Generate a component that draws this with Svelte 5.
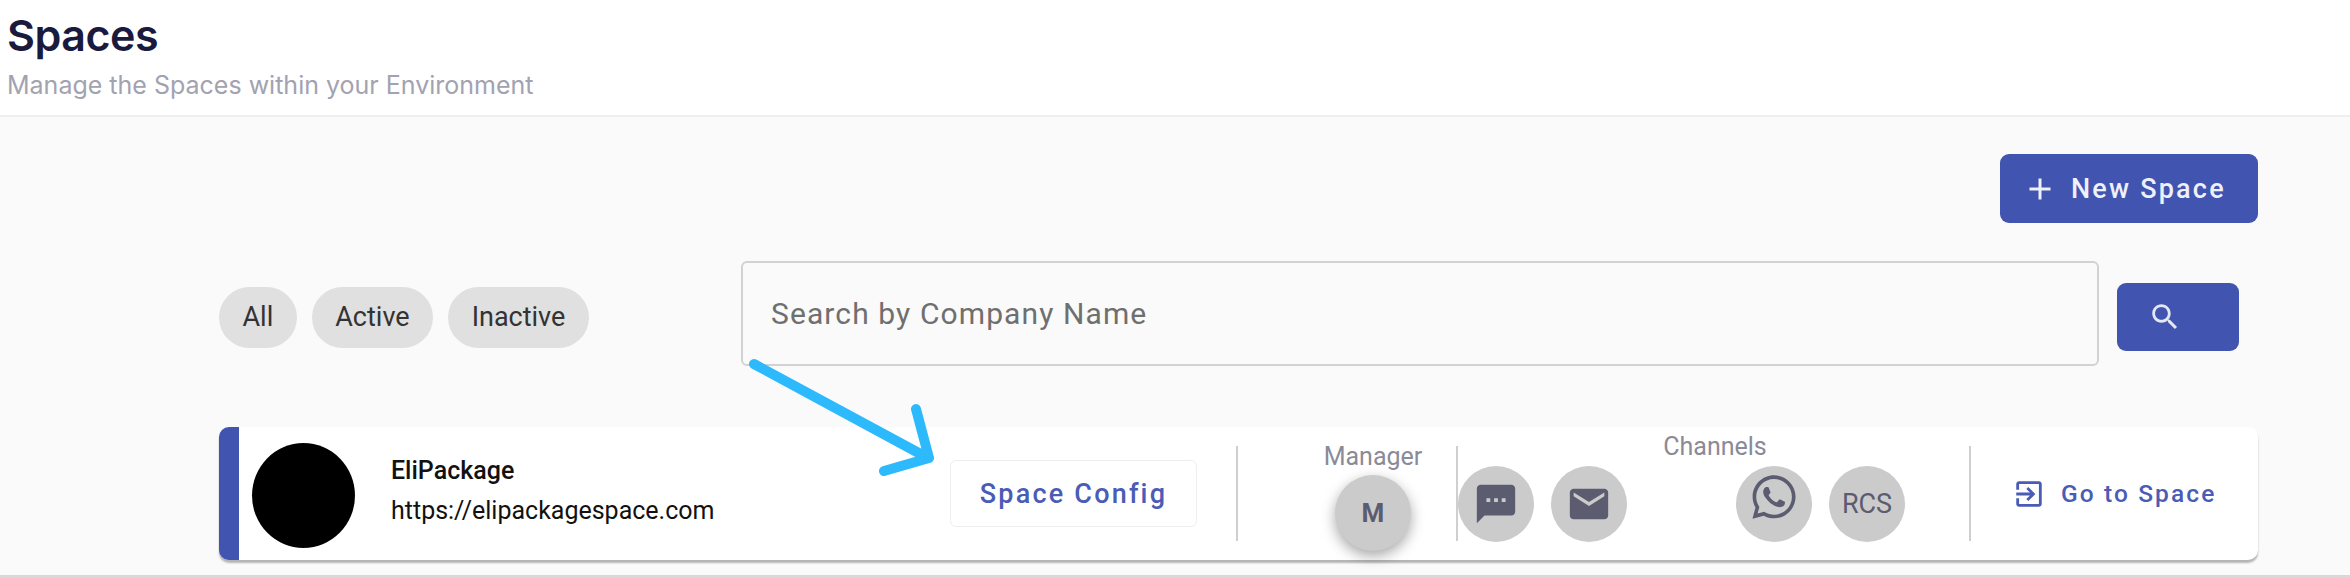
<script lang="ts">
  const filters = ['All', 'Active', 'Inactive'];
</script>

<header class="head">
  <h1>Spaces</h1>
  <p>Manage the Spaces within your Environment</p>
</header>

<main class="page">
  <div class="actions">
    <button class="new">
      <svg viewBox="0 0 24 24" width="36" height="36"><path d="M19 13h-6v6h-2v-6H5v-2h6V5h2v6h6v2z" /></svg>
      New Space
    </button>
  </div>

  <div class="filters">
    <div class="chips">
      {#each filters as f}
        <span class="chip">{f}</span>
      {/each}
    </div>
    <div class="search">Search by Company Name</div>
    <button class="go-search" aria-label="Search">
      <svg viewBox="0 0 24 24" width="34" height="34"><path d="M15.5 14h-.79l-.28-.27C15.41 12.59 16 11.11 16 9.5 16 5.91 13.09 3 9.5 3S3 5.91 3 9.5 5.91 16 9.5 16c1.61 0 3.09-.59 4.23-1.57l.27.28v.79l5 4.99L20.49 19l-4.99-5zm-6 0C7.01 14 5 11.99 5 9.5S7.01 5 9.5 5 14 7.01 14 9.5 11.99 14 9.5 14z" /></svg>
    </button>
  </div>

  <section class="card">
    <div class="identity">
      <div class="avatar"></div>
      <div class="names">
        <b>EliPackage</b>
        <span>https://elipackagespace.com</span>
      </div>
    </div>
    <button class="config">Space Config</button>
    <div class="rule first"></div>
    <div class="manager">
      <div class="label">Manager</div>
      <div class="circle raised">M</div>
    </div>
    <div class="rule"></div>
    <div class="channels">
      <div class="label">Channels</div>
      <div class="chan-row">
        <div class="circle">
          <svg viewBox="0 0 24 24" width="46" height="46"><path d="M20 2H4c-1.1 0-1.99.9-1.99 2L2 22l4-4h14c1.1 0 2-.9 2-2V4c0-1.1-.9-2-2-2zM9 11H7V9h2v2zm4 0h-2V9h2v2zm4 0h-2V9h2v2z" /></svg>
        </div>
        <div class="circle">
          <svg viewBox="0 0 24 24" width="46" height="46"><path d="M20 4H4c-1.1 0-1.99.9-1.99 2L2 18c0 1.1.9 2 2 2h16c1.1 0 2-.9 2-2V6c0-1.1-.9-2-2-2zm0 4l-8 5-8-5V6l8 5 8-5v2z" /></svg>
        </div>
        <div class="slot"></div>
        <div class="circle">
          <svg class="wa" viewBox="0 0 24 24" width="52" height="52"><path d="M19.05 4.91C17.18 3.03 14.69 2 12.04 2c-5.46 0-9.91 4.45-9.91 9.91 0 1.75.46 3.45 1.32 4.95L2.05 22l5.25-1.38c1.45.79 3.08 1.21 4.74 1.21 5.46 0 9.91-4.45 9.91-9.91 0-2.65-1.03-5.14-2.9-7.01zm-7.01 15.24c-1.48 0-2.93-.4-4.2-1.15l-.3-.18-3.12.82.83-3.04-.2-.31c-.82-1.31-1.26-2.83-1.26-4.38 0-4.54 3.7-8.24 8.24-8.24 2.2 0 4.27.86 5.82 2.42 1.56 1.56 2.41 3.63 2.41 5.83.02 4.54-3.68 8.23-8.22 8.23zm4.52-6.16c-.25-.12-1.47-.72-1.69-.81-.23-.08-.39-.12-.56.12-.17.25-.64.81-.78.97-.14.17-.29.19-.54.06-.25-.12-1.05-.39-1.99-1.23-.74-.66-1.23-1.47-1.38-1.72-.14-.25-.02-.38.11-.51.11-.11.25-.29.37-.43s.17-.25.25-.41c.08-.17.04-.31-.02-.43s-.56-1.34-.76-1.84c-.2-.48-.41-.42-.56-.43h-.48c-.17 0-.43.06-.66.31-.22.25-.86.85-.86 2.07 0 1.22.89 2.4 1.01 2.56.12.17 1.75 2.67 4.23 3.74.59.26 1.05.41 1.41.52.59.19 1.13.16 1.56.1.48-.07 1.47-.6 1.67-1.18.21-.58.21-1.07.14-1.18s-.22-.16-.47-.28z" /></svg>
        </div>
        <div class="circle rcs">RCS</div>
      </div>
    </div>
    <div class="rule"></div>
    <a class="enter" href="#space">
      <svg viewBox="0 0 24 24" width="34" height="34"><path d="M10.09 15.59L11.5 17l5-5-5-5-1.41 1.41L12.67 11H3v2h9.67l-2.58 2.59zM19 3H5c-1.11 0-2 .9-2 2v4h2V5h14v14H5v-4H3v4c0 1.1.89 2 2 2h14c1.1 0 2-.9 2-2V5c0-1.1-.9-2-2-2z" /></svg>
      Go to Space
    </a>
  </section>
</main>
<div class="foot"></div>

<!-- annotation drawn over the screenshot -->
<svg class="arrow" width="2350" height="578" viewBox="0 0 2350 578">
  <path d="M754 364 L928 458 M916 409 L929 458 L884 471" />
</svg>

<style>
  :global(body) {
    margin: 0;
    background: #fafafa;
    height: 578px;
    overflow: hidden;
    font-family: Roboto, sans-serif;
  }

  .head {
    height: 117px;
    box-sizing: border-box;
    padding: 10px 7px 0;
    background: #fff;
    border-bottom: 2px solid #efefef;
  }
  .head h1 {
    margin: 0;
    font: 600 43px/50px Inter, sans-serif;
    letter-spacing: -0.5px;
    color: #1a1a3e;
  }
  .head p {
    margin: 10px 0 0;
    font: 400 25px/30px Inter, sans-serif;
    color: #a2a2b0;
  }

  .page {
    padding: 37px 92px 0 219px;
  }
  .actions {
    display: flex;
    justify-content: flex-end;
  }
  button {
    border: 0;
    font-family: Roboto, sans-serif;
    cursor: pointer;
  }
  svg {
    fill: currentColor;
    flex: none;
  }
  .new {
    width: 258px;
    height: 69px;
    display: flex;
    align-items: center;
    gap: 13px;
    padding: 0 0 0 22px;
    background: #4154af;
    color: #eef0fa;
    border-radius: 9px;
    font-size: 27px;
    font-weight: 500;
    letter-spacing: 2.2px;
  }

  .filters {
    display: flex;
    align-items: flex-start;
    margin-top: 38px;
  }
  .chips {
    display: flex;
    gap: 15px;
    width: 371px;
    margin: 26px 151px 0 0;
  }
  .chip {
    height: 61px;
    line-height: 61px;
    padding: 0 23.5px;
    border-radius: 31px;
    background: #e0e0e0;
    color: #333;
    font-size: 27px;
  }
  .search {
    width: 1358px;
    height: 105px;
    box-sizing: border-box;
    display: flex;
    align-items: center;
    padding: 0 28px;
    border: 2px solid #d2d2d2;
    border-radius: 6px;
    color: #6f6f6f;
    font-size: 30px;
    letter-spacing: 1.1px;
  }
  .go-search {
    width: 122px;
    height: 68px;
    margin: 22px 0 0 18px;
    display: flex;
    align-items: center;
    padding: 0 0 0 31px;
    background: #4154af;
    color: #e4e7f6;
    border-radius: 9px;
  }

  .card {
    display: flex;
    align-items: center;
    width: 2039px;
    height: 133px;
    box-sizing: border-box;
    margin-top: 61px;
    background: #fff;
    border-left: 20px solid #4154af;
    border-radius: 10px;
    box-shadow: 0 3px 2px rgba(0, 0, 0, 0.28);
  }
  .identity {
    width: 711px;
    box-sizing: border-box;
    display: flex;
    align-items: center;
    gap: 36px;
    padding-left: 13px;
  }
  .avatar {
    width: 103px;
    height: 105px;
    margin-top: 3px;
    border-radius: 50%;
    background: #000;
  }
  .names {
    display: flex;
    flex-direction: column;
    gap: 14px;
    margin-top: -6px;
    color: #111;
    font-size: 25px;
    line-height: 26px;
  }
  .names b {
    font-weight: 500;
  }
  .config {
    width: 247px;
    height: 67px;
    background: #fff;
    border: 1px solid #eee;
    border-radius: 6px;
    color: #4a5cb5;
    font-size: 27px;
    font-weight: 500;
    letter-spacing: 2.2px;
  }
  .rule {
    width: 2px;
    height: 95px;
    background: #cfcfcf;
    flex: none;
  }
  .rule.first {
    margin-left: 39px;
  }
  .label {
    color: #8a8a98;
    font-size: 25px;
    line-height: 26px;
    text-align: center;
  }
  .circle {
    width: 76px;
    height: 76px;
    border-radius: 50%;
    flex: none;
    display: flex;
    align-items: center;
    justify-content: center;
    background: #cbcbcb;
    color: #5b5c70;
  }
  .manager {
    width: 218px;
    box-sizing: border-box;
    height: 133px;
    padding: 17px 0 0 52px;
    display: flex;
    flex-direction: column;
    align-items: center;
    gap: 5px;
  }
  .raised {
    font-size: 26px;
    font-weight: 700;
    box-shadow: 0 5px 14px rgba(0, 0, 0, 0.35);
  }
  .channels {
    width: 511px;
    height: 133px;
    box-sizing: border-box;
    padding-top: 7px;
  }
  .channels .label {
    padding-left: 3px;
    margin-bottom: 6px;
  }
  .chan-row {
    display: flex;
    gap: 17px;
  }
  .slot {
    width: 75px;
    flex: none;
  }
  .wa {
    margin-bottom: 15px;
  }
  .rcs {
    font-size: 27px;
  }
  .enter {
    display: flex;
    align-items: center;
    gap: 15px;
    margin-left: 41px;
    color: #4a5cb5;
    text-decoration: none;
    font-size: 24.5px;
    font-weight: 500;
    letter-spacing: 2.1px;
    white-space: nowrap;
  }

  .foot {
    height: 3px;
    margin-top: 15px;
    background: #d8d8d8;
  }

  .arrow {
    position: absolute;
    top: 0;
    left: 0;
    pointer-events: none;
  }
  .arrow path {
    fill: none;
    stroke: #2cbafc;
    stroke-width: 10;
    stroke-linecap: round;
    stroke-linejoin: round;
  }
</style>
